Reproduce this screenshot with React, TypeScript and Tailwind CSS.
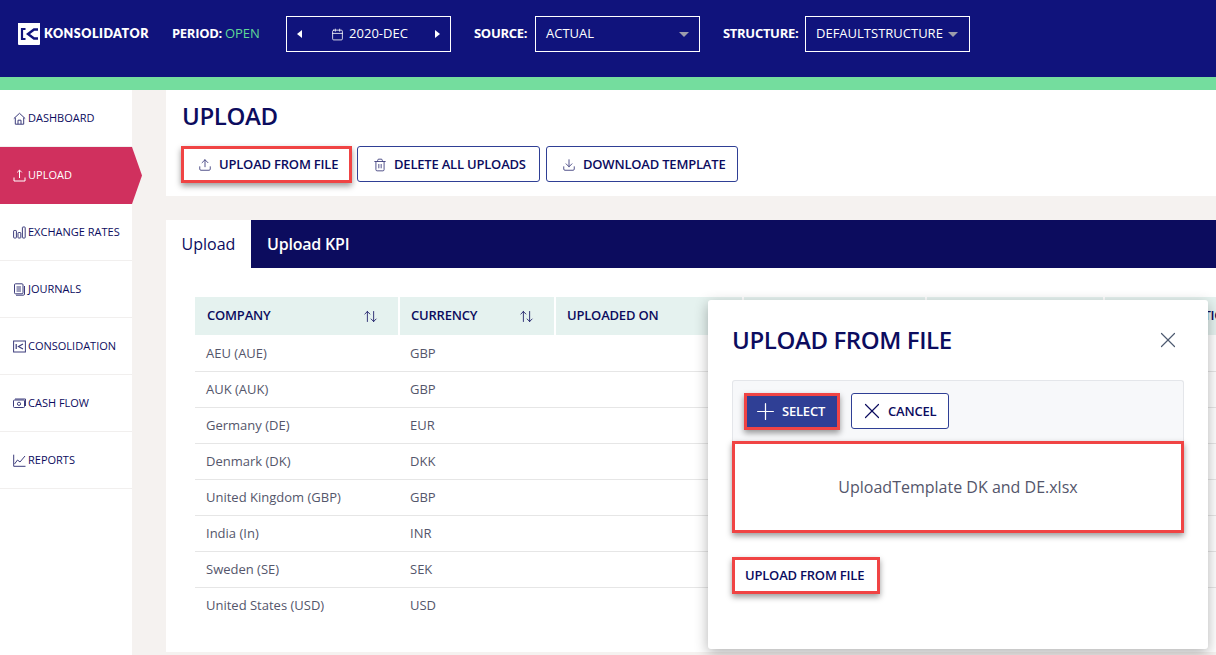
import React from 'react';
import { ArrowUpDown, Calendar, Download, Plus, Trash2, Upload, X } from 'lucide-react';

const navy = 'text-[#0c0c5e]';

const HomeIcon = () => (
  <svg width="13" height="13" viewBox="0 0 13 13" fill="none" stroke="#3d3d7c" strokeWidth="1">
    <path d="M0.8 6.6 6.5 1.3l5.7 5.3M2.3 5.6v6.6h8.4V5.6M5 12.2V8.2h3v4" />
  </svg>
);
const UploadSmall = () => (
  <svg width="13" height="13" viewBox="0 0 13 13" fill="none" stroke="#fff" strokeWidth="1">
    <path d="M6.5 9V1.2M4.2 3.4l2.3-2.3 2.3 2.3M1 8.5v3.5h11V8.5" />
  </svg>
);
const BarsIcon = () => (
  <svg width="13" height="13" viewBox="0 0 13 13" fill="none" stroke="#3d3d7c" strokeWidth="1">
    <rect x="0.6" y="4.5" width="2.8" height="7.5" rx="0.6" />
    <rect x="5" y="6.5" width="2.8" height="5.5" rx="0.6" />
    <rect x="9.4" y="1" width="2.8" height="11" rx="0.6" />
  </svg>
);
const JournalIcon = () => (
  <svg width="13" height="13" viewBox="0 0 13 13" fill="none" stroke="#3d3d7c" strokeWidth="1">
    <rect x="1.5" y="0.8" width="8.5" height="10" rx="1" />
    <path d="M3.5 4h4.5M3.5 6h4.5M3.5 8h4.5M11.5 3v8a1.2 1.2 0 0 1-1.2 1.2H3" />
  </svg>
);
const ConsolidationIcon = () => (
  <svg width="13" height="13" viewBox="0 0 13 13" fill="none" stroke="#3d3d7c" strokeWidth="1">
    <rect x="0.6" y="1" width="11.8" height="11" />
    <path d="M3.2 4v5M10 4 5.5 6.5 10 9" strokeWidth="1.2" />
  </svg>
);
const CashIcon = () => (
  <svg width="13" height="13" viewBox="0 0 13 13" fill="none" stroke="#3d3d7c" strokeWidth="1">
    <rect x="0.5" y="3" width="11" height="7.5" rx="1" />
    <circle cx="6" cy="6.8" r="1.6" />
    <path d="M2 2h10.5v7" />
  </svg>
);
const ChartIcon = () => (
  <svg width="13" height="13" viewBox="0 0 13 13" fill="none" stroke="#3d3d7c" strokeWidth="1">
    <path d="M0.7 0.7v11.6h11.8M1.5 10l3-4 2.5 2 5-6" />
  </svg>
);

const navItems = [
  { label: 'DASHBOARD', icon: <HomeIcon /> },
  { label: 'UPLOAD', icon: <UploadSmall />, active: true },
  { label: 'EXCHANGE RATES', icon: <BarsIcon /> },
  { label: 'JOURNALS', icon: <JournalIcon /> },
  { label: 'CONSOLIDATION', icon: <ConsolidationIcon /> },
  { label: 'CASH FLOW', icon: <CashIcon /> },
  { label: 'REPORTS', icon: <ChartIcon /> },
];

const rows = [
  ['AEU (AUE)', 'GBP'],
  ['AUK (AUK)', 'GBP'],
  ['Germany (DE)', 'EUR'],
  ['Denmark (DK)', 'DKK'],
  ['United Kingdom (GBP)', 'GBP'],
  ['India (In)', 'INR'],
  ['Sweden (SE)', 'SEK'],
  ['United States (USD)', 'USD'],
];

const Logo = () => (
  <div className="flex items-center gap-[3px]">
    <svg width="24" height="24" viewBox="0 0 24 24">
      <path d="M1 1h22v21a1 1 0 0 1-1 1H2a1 1 0 0 1-1-1z" fill="#fff" />
      <path d="M8.5 7H5v10h3.5" stroke="#10137c" strokeWidth="2.2" fill="none" />
      <path d="M21 7.5h-4L11 12l6 4.5h4" stroke="#10137c" strokeWidth="2.4" fill="none" />
    </svg>
    <span className="text-[12.5px] font-extrabold tracking-[0.5px] text-white font-['Lato',sans-serif]">KONSOLIDATOR</span>
  </div>
);

const Caret = () => <span className="h-0 w-0 border-x-[5px] border-t-[5px] border-x-transparent border-t-[#9c9cab]" />;

const App: React.FC = () => {
  return (
    <div className="relative h-[655px] w-[1216px] overflow-hidden bg-[#f5f2f0] font-['Open_Sans',sans-serif]">
      <header className="flex h-[77px] items-start bg-[#10137c] pl-[17px] pt-[16px] text-white">
        <div className="flex h-9 w-[155px] items-center"><Logo /></div>
        <div className="flex h-9 w-[114px] items-center gap-[3px] text-[13px]">
          <span className="font-bold tracking-[-0.3px]">PERIOD:</span>
          <span className="text-[#5fd896]">OPEN</span>
        </div>
        <div className="flex h-9 w-[165px] items-center justify-between border border-white px-[10px] text-[13px]">
          <span className="h-0 w-0 border-y-[4px] border-r-[5px] border-y-transparent border-r-white" />
          <span className="ml-[2px] flex items-center gap-[5px]"><Calendar size={13} strokeWidth={1.5} />2020-DEC</span>
          <span className="h-0 w-0 border-y-[4px] border-l-[5px] border-y-transparent border-l-white" />
        </div>
        <span className="ml-[23px] flex h-9 w-[61px] items-center text-[13px] font-bold tracking-[-0.3px]">SOURCE:</span>
        <div className="flex h-9 w-[165px] items-center justify-between border border-white pl-[10px] pr-[10px] text-[13px]">
          ACTUAL
          <Caret />
        </div>
        <span className="ml-[23px] flex h-9 w-[82px] items-center text-[13px] font-bold tracking-[-0.3px]">STRUCTURE:</span>
        <div className="flex h-9 w-[165px] items-center justify-between border border-white pl-[10px] pr-[11px] text-[13px]">
          DEFAULTSTRUCTURE
          <Caret />
        </div>
      </header>
      <div className="h-[13px] bg-[#74dd9e]" />

      <div className="flex">
        <nav className="relative h-[565px] w-[132px] shrink-0 bg-white">
          {navItems.map((item) =>
            item.active ? (
              <div
                key={item.label}
                className="flex h-[57px] w-[142px] items-center gap-[2px] bg-[#d0305e] pl-[13px] text-[11px] text-white [clip-path:polygon(0_0,132px_0,142px_50%,132px_100%,0_100%)]"
              >
                {item.icon}
                {item.label}
              </div>
            ) : (
              <div
                key={item.label}
                className={`flex h-[57px] items-center gap-[2px] border-b border-[#f1efee] pl-[13px] text-[11px] ${navy}`}
              >
                {item.icon}
                <span className="whitespace-nowrap">{item.label}</span>
              </div>
            ),
          )}
        </nav>

        <main className="ml-[34px] flex-1">
          <section className="h-[106px] bg-white pl-[16px] pt-[10px]">
            <h1 className={`text-2xl font-semibold leading-[32px] tracking-[-0.4px] ${navy}`}>UPLOAD</h1>
            <div className="mt-[14px] flex items-start">
              <button className={`-ml-px flex h-[37px] w-[171px] items-center gap-[7px] border-[3px] border-[#f04444] bg-white pl-[14px] text-[13px] font-semibold tracking-[-0.2px] shadow-[0_3px_6px_rgba(0,0,0,0.4)] ${navy}`}>
                <Upload size={14} strokeWidth={1.5} className="text-[#3d3d7c]" />
                UPLOAD FROM FILE
              </button>
              <button className={`ml-[5px] flex h-9 w-[183px] items-center gap-[7px] rounded-[3px] border border-[#2f3f95] bg-white pl-[15px] pt-px text-[13px] font-semibold tracking-[-0.2px] ${navy}`}>
                <Trash2 size={14} strokeWidth={1.5} className="text-[#3d3d7c]" />
                DELETE ALL UPLOADS
              </button>
              <button className={`ml-[6px] flex h-9 w-[192px] items-center gap-[7px] rounded-[3px] border border-[#2f3f95] bg-white pl-[15px] pt-px text-[13px] font-semibold tracking-[-0.2px] ${navy}`}>
                <Download size={14} strokeWidth={1.5} className="text-[#3d3d7c]" />
                DOWNLOAD TEMPLATE
              </button>
            </div>
          </section>

          <section className="mt-[24px] bg-white">
            <div className="flex h-[48px] bg-[#0c0c5e]">
              <div className={`flex w-[85px] items-center justify-center bg-white text-base ${navy}`}>Upload</div>
              <div className="flex items-center pl-4 text-base font-semibold tracking-[-0.2px] text-white">Upload KPI</div>
            </div>
            <div className="h-[384px] pl-[29px] pt-[29px]">
              <table className="w-[1080px] table-fixed border-collapse text-[13px]">
                <colgroup>
                  <col className="w-[204px]" />
                  <col className="w-[156px]" />
                  <col className="w-[188px]" />
                  <col className="w-[183px]" />
                  <col className="w-[178px]" />
                  <col />
                </colgroup>
                <thead>
                  <tr className={`h-[38px] bg-[#e5f2ef] text-left ${navy}`}>
                    <th className="border-r-2 border-white pl-3 pr-[20px] font-semibold tracking-[-0.2px]">
                      <div className="flex items-center justify-between">COMPANY<ArrowUpDown size={15} strokeWidth={1.3} /></div>
                    </th>
                    <th className="border-r-2 border-white pl-[11px] pr-[20px] font-semibold tracking-[-0.2px]">
                      <div className="flex items-center justify-between">CURRENCY<ArrowUpDown size={15} strokeWidth={1.3} /></div>
                    </th>
                    <th className="border-r-2 border-white pl-[11px] font-semibold tracking-[-0.2px]">UPLOADED ON</th>
                    <th className="border-r-2 border-white" />
                    <th className="border-r-2 border-white" />
                    <th className="whitespace-nowrap pl-[25px] font-semibold tracking-[-0.2px]">CONSOLIDATION</th>
                  </tr>
                </thead>
                <tbody className="text-[#54566b]">
                  {rows.map(([company, currency], i) => (
                    <tr key={company} className={`h-9 border-b ${i < rows.length - 1 ? 'border-[#e6e6e6]' : 'border-transparent'}`}>
                      <td className="pl-[11px] pt-[2px]">{company}</td>
                      <td className="pl-[11px] pt-[2px]">{currency}</td>
                      <td />
                      <td />
                      <td />
                      <td />
                    </tr>
                  ))}
                </tbody>
              </table>
            </div>
          </section>
        </main>
      </div>

      {/* modal sits over the table */}
      <div className="absolute left-[708px] top-[300px] h-[349px] w-[500px] rounded-[3px] bg-white px-6 shadow-[0_4px_14px_rgba(0,0,0,0.3)]">
        <div className="flex h-[80px] items-center justify-between pr-[3px]">
          <h2 className={`text-2xl font-semibold tracking-[-0.4px] ${navy}`}>UPLOAD FROM FILE</h2>
          <X size={26} strokeWidth={1.1} className="text-[#4d5a70]" />
        </div>
        <div className="flex h-[61px] items-center gap-[11px] rounded-t-[3px] border border-b-0 border-[#e4e6ea] bg-[#f7f8fa] pl-[11px]">
          <button className="flex h-[37px] w-[96px] items-center gap-[3px] border-[3px] border-[#f04444] bg-[#2f3f95] pl-[5px] pt-px text-[13px] font-semibold tracking-[-0.2px] text-white shadow-[0_3px_6px_rgba(0,0,0,0.4)]">
            <Plus size={27} strokeWidth={1.1} className="-mt-px" />
            SELECT
          </button>
          <button className={`flex h-9 w-[98px] items-center gap-[3px] rounded-[3px] border border-[#2f3f95] bg-white pl-[7px] pt-px text-[13px] font-semibold tracking-[-0.2px] ${navy}`}>
            <X size={26} strokeWidth={1.1} className="-mt-px" />
            CANCEL
          </button>
        </div>
        <div className="flex h-[92px] items-center justify-center border-[3px] border-[#f04444] bg-white text-base text-[#54566b] shadow-[0_3px_6px_rgba(0,0,0,0.4)]">
          UploadTemplate DK and DE.xlsx
        </div>
        <button className={`mt-[24px] flex h-[37px] w-[148px] items-center border-[3px] border-[#f04444] bg-white pl-[10px] text-[13px] font-semibold tracking-[-0.2px] shadow-[0_3px_6px_rgba(0,0,0,0.4)] ${navy}`}>
          UPLOAD FROM FILE
        </button>
      </div>
    </div>
  );
};

export default App;
